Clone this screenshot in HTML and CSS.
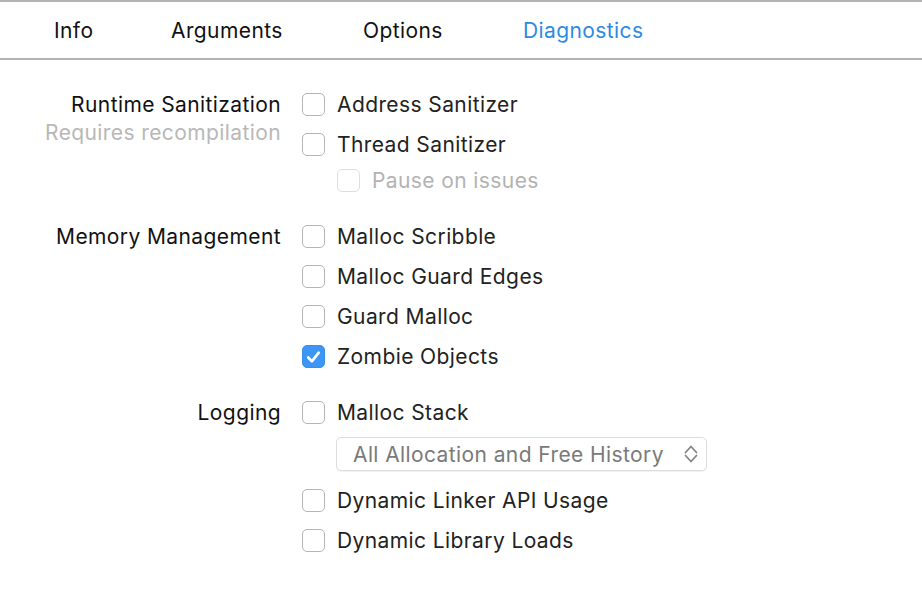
FILE: index.html
```html
<!DOCTYPE html>
<html>
<head>
<meta charset="utf-8">
<link rel="stylesheet" href="styles.css">
</head>
<body>
<div class="tabbar">
  <div class="tab">Info</div>
  <div class="tab">Arguments</div>
  <div class="tab">Options</div>
  <div class="tab active">Diagnostics</div>
</div>
<div class="content">
  <div class="section sec-runtime">
    <div class="label">
      <div class="title">Runtime Sanitization</div>
      <div class="sub">Requires recompilation</div>
    </div>
    <div class="controls">
      <div class="row"><span class="cb"></span><span class="txt">Address Sanitizer</span></div>
      <div class="row"><span class="cb"></span><span class="txt">Thread Sanitizer</span></div>
      <div class="row subrow disabled"><span class="cb"></span><span class="txt">Pause on issues</span></div>
    </div>
  </div>
  <div class="section sec-memory">
    <div class="label">
      <div class="title">Memory Management</div>
    </div>
    <div class="controls">
      <div class="row"><span class="cb"></span><span class="txt">Malloc Scribble</span></div>
      <div class="row"><span class="cb"></span><span class="txt">Malloc Guard Edges</span></div>
      <div class="row"><span class="cb"></span><span class="txt">Guard Malloc</span></div>
      <div class="row"><span class="cb checked"><svg viewBox="0 0 22 22" width="22" height="22"><path d="M5.5 11.5 L9.3 15.5 L16.5 6.5" fill="none" stroke="#fff" stroke-width="2.8" stroke-linecap="round" stroke-linejoin="round"/></svg></span><span class="txt">Zombie Objects</span></div>
    </div>
  </div>
  <div class="section sec-logging">
    <div class="label">
      <div class="title">Logging</div>
    </div>
    <div class="controls">
      <div class="row"><span class="cb"></span><span class="txt">Malloc Stack</span></div>
      <div class="popup">
        <span class="popup-text">All Allocation and Free History</span>
        <svg class="chev" viewBox="0 0 14 22" width="14" height="22"><path d="M1.5 9.5 L7 3.5 L12.5 9.5" fill="none" stroke="#858585" stroke-width="1.8" stroke-linecap="round" stroke-linejoin="round"/><path d="M1.5 12.5 L7 18.5 L12.5 12.5" fill="none" stroke="#858585" stroke-width="1.8" stroke-linecap="round" stroke-linejoin="round"/></svg>
      </div>
      <div class="row"><span class="cb"></span><span class="txt">Dynamic Linker API Usage</span></div>
      <div class="row"><span class="cb"></span><span class="txt">Dynamic Library Loads</span></div>
    </div>
  </div>
</div>
</body>
</html>
```
FILE: styles.css
```css
* { box-sizing: border-box; }
html, body { margin: 0; padding: 0; background: #fff; }
body {
  font-family: "Inter", "Roboto", "Liberation Sans", sans-serif;
  font-size: 21px;
  letter-spacing: 0.4px;
  color: #222;
  width: 922px;
  height: 592px;
  overflow: hidden;
}
.tabbar {
  height: 60px;
  border-top: 2px solid #b3b3b3;
  border-bottom: 2px solid #b3b3b3;
  display: grid;
  grid-template-columns: 117px 192px 160px auto;
  padding-left: 54px;
  padding-top: 2px;
  align-items: center;
}
.tab { color: #111; line-height: 24px; }
.tab.active { color: #2e8ae0; }
.content { padding-top: 24px; }
.section {
  display: grid;
  grid-template-columns: 281px auto;
  column-gap: 21px;
}
.sec-memory { margin-top: 20px; }
.sec-logging { margin-top: 16px; }
.label { text-align: right; padding-top: 1px; }
.title { line-height: 40px; color: #111; }
.sub { line-height: 24px; margin-top: -4px; color: #b8b8b8; }
.controls { display: flex; flex-direction: column; }
.row { display: flex; align-items: center; height: 40px; }
.row.subrow { height: 32px; padding-left: 35px; }
.cb {
  width: 23px; height: 23px;
  border: 1px solid #b5b5b5;
  border-radius: 5px;
  background: #fff;
  flex: none;
  display: flex;
}
.cb.checked { background: #3b96f5; border-color: #3a8fe8; }
.txt { margin-left: 12px; }
.disabled .cb { border-color: #dedede; }
.disabled .txt { color: #b3b3b3; }
.popup {
  margin-left: 34px;
  margin-top: 5px;
  margin-bottom: 9px;
  width: 371px;
  height: 34px;
  border: 1px solid #dcdcdc;
  border-radius: 5px;
  box-shadow: 0 1px 1px rgba(0,0,0,0.06);
  display: flex;
  align-items: center;
  padding-left: 16px;
  padding-right: 8px;
}
.popup-text { color: #7a7a7a; flex: 1; }
.chev { flex: none; }
```
